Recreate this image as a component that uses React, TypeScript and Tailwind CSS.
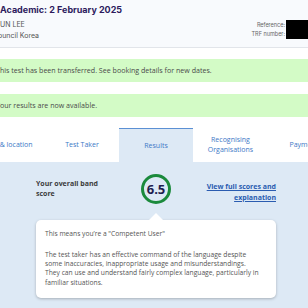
const body = "font-['Open_Sans',sans-serif]";

const tabs = [
  { label: "Date & location", w: "w-[75px]" },
  { label: "Test Taker", w: "w-[74px]" },
  { label: "Results", w: "w-[74px]", active: true },
  { label: "Recognising Organisations", w: "w-[75px]" },
  { label: "Payments", w: "w-[75px]" },
];

const meaning = [
  "The test taker has an effective command of the language despite",
  "some inaccuracies, inappropriate usage and misunderstandings.",
  "They can use and understand fairly complex language, particularly in",
  "familiar situations.",
];

export default function App() {
  return (
    <div className={`w-[308px] h-[308px] overflow-hidden bg-white flex flex-col ${body}`}>
      {/* header */}
      <div className="h-[48px] shrink-0 bg-[#f8fafd] border-b border-[#e2e5ea] flex justify-between">
        <div className="pt-[4px]">
          <div className="text-[9px] leading-[12px] font-bold text-[#2d1b5e] font-['Inter',sans-serif]">
            Academic: 2 February 2025
          </div>
          <div className="mt-[4px] text-[7px] leading-[10px] text-[#555] font-['Inter',sans-serif]">UN LEE</div>
          <div className="mt-[1px] -ml-[2px] text-[7px] leading-[10px] text-[#555] font-['Inter',sans-serif]">ouncil Korea</div>
        </div>
        <div className="pt-[20px] text-[5.5px] text-[#666] font-['Inter',sans-serif]">
          <div className="flex items-center h-[9.5px]">
            <span className="ml-auto pr-[1px]">Reference:</span>
            <div className="w-[22px] h-full bg-black" />
          </div>
          <div className="flex items-center h-[9.5px]">
            <span className="ml-auto pr-[1px]">TRF number:</span>
            <div className="w-[22px] h-full bg-black" />
          </div>
        </div>
      </div>

      {/* banners */}
      <div className="mt-[11px] h-[23px] shrink-0 bg-[#d3fbc6] flex items-center text-[7.1px] text-[#4a4a4a]">
        <span className="-ml-[4px]">This test has been transferred. See booking details for new dates.</span>
      </div>
      <div className="mt-[12px] h-[23px] shrink-0 bg-[#d3fbc6] flex items-center text-[7.1px] text-[#4a4a4a]">
        <span className="-ml-[4px]">Your results are now available.</span>
      </div>

      {/* tabs */}
      <div className="mt-[11px] h-[34px] shrink-0 flex -ml-[30px]">
        {tabs.map((t) => (
          <div
            key={t.label}
            className={`${t.w} shrink-0 flex items-center justify-center text-center text-[7px] leading-[10px] text-[#3d78c6] ${
              t.active ? "bg-[#dde9f5] border-t border-[#5b90d4]" : "bg-white"
            }`}
          >
            {t.label === "Recognising Organisations" ? (
              <span>
                Recognising
                <br />
                Organisations
              </span>
            ) : (
              <span className="whitespace-nowrap">{t.label}</span>
            )}
          </div>
        ))}
      </div>

      {/* results panel */}
      <div className="flex-1 bg-[#dde9f5]">
        <div className="w-[240px] ml-[36px]">
          <div className="grid grid-cols-[80px_80px_80px] pt-[12px]">
            <div className="mt-[5px] text-[7px] leading-[10px] font-bold text-[#3b3b3b]">
              Your overall band
              <br />
              score
            </div>
            <div className="flex justify-center">
              <div className="w-[30px] h-[30px] rounded-full border-[3.5px] border-[#1b8a3c] flex items-center justify-center">
                <span className="text-[13px] font-bold text-[#1d1d4e] leading-none">6.5</span>
              </div>
            </div>
            <div className="mt-[8px] text-right text-[7px] leading-[10.5px] font-bold text-[#2a5cb0] underline">
              View full scores and
              <br />
              explanation
            </div>
          </div>

          <div className="mt-[9px] flex justify-center">
            <div className="w-0 h-0 border-l-[7px] border-r-[7px] border-b-[7px] border-l-transparent border-r-transparent border-b-white" />
          </div>
          <div className="h-[78px] rounded-[5px] bg-white shadow-[0_1px_3px_rgba(0,0,0,0.25)] px-[9px] pt-[9px] text-[6.7px] leading-[9.3px] text-[#555]">
            <p>This means you’re a "Competent User"</p>
            <p className="mt-[11.6px]">
              {meaning.map((line) => (
                <span key={line} className="block whitespace-nowrap">
                  {line}
                </span>
              ))}
            </p>
          </div>
        </div>
      </div>
    </div>
  );
}
